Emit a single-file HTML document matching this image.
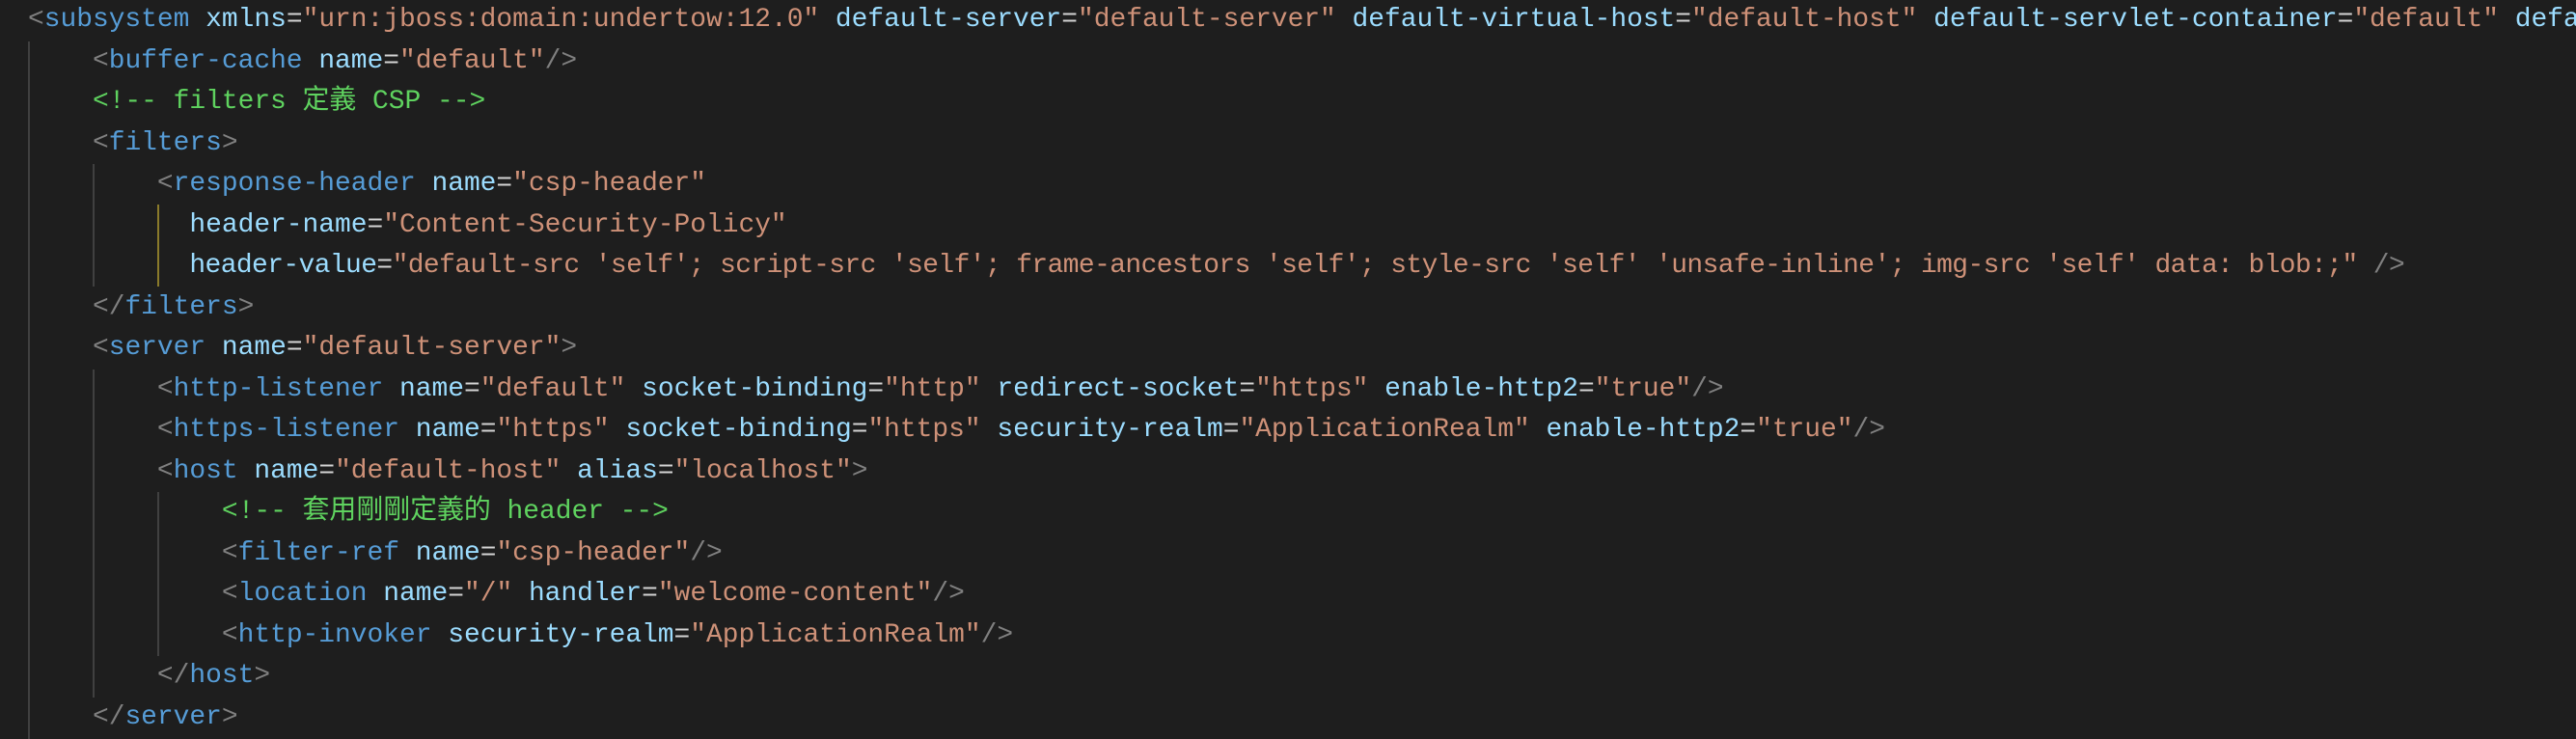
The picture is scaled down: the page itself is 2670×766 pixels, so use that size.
<!DOCTYPE html>
<html><head><meta charset="utf-8"><style>
html,body{margin:0;padding:0;background:#1e1e1e;width:2670px;height:766px;overflow:hidden;position:relative}
.code{position:absolute;left:29px;top:0;width:2641px;height:766px;overflow:hidden;font-family:"Liberation Mono","Noto Sans CJK TC",monospace;font-size:27.9px;color:#d4d4d4}
.l{height:42.5px;line-height:42.5px;white-space:pre}
.p{color:#808080}.t{color:#569cd6}.a{color:#9cdcfe}.s{color:#ce9178}.c{color:#5fd35f}.e{color:#d4d4d4}
.g{position:absolute;width:2px;background:#404040}
</style></head><body>
<div class="g" style="left:29px;top:43px;height:723px"></div>
<div class="g" style="left:96px;top:170px;height:127px"></div>
<div class="g" style="left:96px;top:383px;height:340px"></div>
<div class="g" style="left:163px;top:212px;height:85px;background:#8a7a2a"></div>
<div class="g" style="left:163px;top:510px;height:170px"></div>
<div class="code"><div class="l"><span class="p">&lt;</span><span class="t">subsystem</span> <span class="a">xmlns</span><span class="e">=</span><span class="s">"urn:jboss:domain:undertow:12.0"</span> <span class="a">default-server</span><span class="e">=</span><span class="s">"default-server"</span> <span class="a">default-virtual-host</span><span class="e">=</span><span class="s">"default-host"</span> <span class="a">default-servlet-container</span><span class="e">=</span><span class="s">"default"</span> <span class="a">default-security-domain</span><span class="e">=</span><span class="s">"other"</span><span class="p">&gt;</span></div><div class="l">    <span class="p">&lt;</span><span class="t">buffer-cache</span> <span class="a">name</span><span class="e">=</span><span class="s">"default"</span><span class="p">/&gt;</span></div><div class="l">    <span class="c">&lt;!-- filters 定義 CSP --&gt;</span></div><div class="l">    <span class="p">&lt;</span><span class="t">filters</span><span class="p">&gt;</span></div><div class="l">        <span class="p">&lt;</span><span class="t">response-header</span> <span class="a">name</span><span class="e">=</span><span class="s">"csp-header"</span></div><div class="l">          <span class="a">header-name</span><span class="e">=</span><span class="s">"Content-Security-Policy"</span></div><div class="l">          <span style="letter-spacing:-0.57px"><span class="a">header-value</span><span class="e">=</span><span class="s">"default-src 'self'; script-src 'self'; frame-ancestors 'self'; style-src 'self' 'unsafe-inline'; img-src 'self' data: blob:;"</span> <span class="p">/&gt;</span></span></div><div class="l">    <span class="p">&lt;/</span><span class="t">filters</span><span class="p">&gt;</span></div><div class="l">    <span class="p">&lt;</span><span class="t">server</span> <span class="a">name</span><span class="e">=</span><span class="s">"default-server"</span><span class="p">&gt;</span></div><div class="l">        <span class="p">&lt;</span><span class="t">http-listener</span> <span class="a">name</span><span class="e">=</span><span class="s">"default"</span> <span class="a">socket-binding</span><span class="e">=</span><span class="s">"http"</span> <span class="a">redirect-socket</span><span class="e">=</span><span class="s">"https"</span> <span class="a">enable-http2</span><span class="e">=</span><span class="s">"true"</span><span class="p">/&gt;</span></div><div class="l">        <span class="p">&lt;</span><span class="t">https-listener</span> <span class="a">name</span><span class="e">=</span><span class="s">"https"</span> <span class="a">socket-binding</span><span class="e">=</span><span class="s">"https"</span> <span class="a">security-realm</span><span class="e">=</span><span class="s">"ApplicationRealm"</span> <span class="a">enable-http2</span><span class="e">=</span><span class="s">"true"</span><span class="p">/&gt;</span></div><div class="l">        <span class="p">&lt;</span><span class="t">host</span> <span class="a">name</span><span class="e">=</span><span class="s">"default-host"</span> <span class="a">alias</span><span class="e">=</span><span class="s">"localhost"</span><span class="p">&gt;</span></div><div class="l">            <span class="c">&lt;!-- 套用剛剛定義的 header --&gt;</span></div><div class="l">            <span class="p">&lt;</span><span class="t">filter-ref</span> <span class="a">name</span><span class="e">=</span><span class="s">"csp-header"</span><span class="p">/&gt;</span></div><div class="l">            <span class="p">&lt;</span><span class="t">location</span> <span class="a">name</span><span class="e">=</span><span class="s">"/"</span> <span class="a">handler</span><span class="e">=</span><span class="s">"welcome-content"</span><span class="p">/&gt;</span></div><div class="l">            <span class="p">&lt;</span><span class="t">http-invoker</span> <span class="a">security-realm</span><span class="e">=</span><span class="s">"ApplicationRealm"</span><span class="p">/&gt;</span></div><div class="l">        <span class="p">&lt;/</span><span class="t">host</span><span class="p">&gt;</span></div><div class="l">    <span class="p">&lt;/</span><span class="t">server</span><span class="p">&gt;</span></div></div>
</body></html>
